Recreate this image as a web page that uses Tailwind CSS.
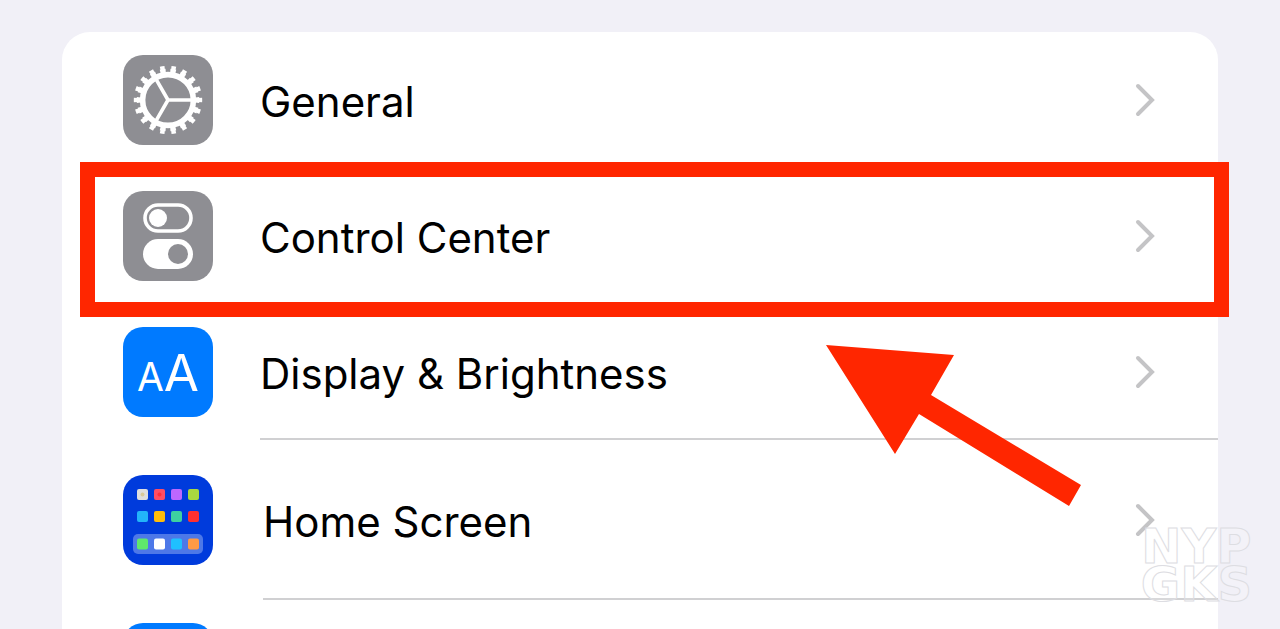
<!DOCTYPE html>
<html lang="en">
<head>
<meta charset="utf-8">
<meta name="viewport" content="width=device-width, initial-scale=1">
<title>Settings</title>
<script src="https://cdn.jsdelivr.net/npm/@tailwindcss/browser@4"></script>
</head>
<body class="relative h-screen overflow-hidden bg-[#f1f0f7] font-['Inter',sans-serif] text-[42px] leading-none text-black">
<main class="flex h-full flex-col pt-8 pr-[62px] pl-[62px]">
  <nav class="flex min-h-0 flex-1 flex-col rounded-t-[28px] bg-white">
    <a href="#general" class="flex h-[136px] shrink-0 items-center pl-[61px]">
      <svg class="size-[90px] shrink-0" viewBox="0 0 90 90" fill="none" stroke="#fff" aria-hidden="true">
        <rect width="90" height="90" rx="20" fill="#8e8e93" stroke="none"/>
        <g transform="translate(45 45)">
          <circle r="25.4" stroke-width="5.6"/>
          <circle r="29.3" stroke-width="4" pathLength="18" stroke-dasharray=".54 .46" stroke-dashoffset=".27"/>
          <circle r="32.2" stroke-width="4" pathLength="18" stroke-dasharray=".4 .6" stroke-dashoffset=".2"/>
          <path d="M0 0H24M0 0L-12 -20.8M0 0L-12 20.8" stroke-width="3.6"/>
        </g>
      </svg>
      <span class="ml-[47px] flex h-full flex-1 items-center justify-between pt-1 pr-[62px]">General
        <svg class="mb-1 h-9 w-6" viewBox="0 0 24 36" fill="none" stroke="#c4c4c6" stroke-width="4" stroke-linecap="round" aria-hidden="true"><path d="M6 4L20 18L6 32"/></svg>
      </span>
    </a>
    <a href="#control-center" class="relative flex h-[136px] shrink-0 items-center pl-[61px]">
      <svg class="size-[90px] shrink-0" viewBox="0 0 90 90" fill="none" aria-hidden="true">
        <rect width="90" height="90" rx="20" fill="#8e8e93"/>
        <rect x="22" y="14" width="46" height="26" rx="13" stroke="#fff" stroke-width="3.6"/>
        <circle cx="35" cy="27" r="9" fill="#fff"/>
        <rect x="20" y="48" width="50" height="30" rx="15" fill="#fff"/>
        <circle cx="55" cy="63" r="10" fill="#8e8e93"/>
      </svg>
      <span class="ml-[47px] flex h-full flex-1 items-center justify-between pt-1 pr-[62px]">Control Center
        <svg class="mb-1 h-9 w-6" viewBox="0 0 24 36" fill="none" stroke="#c4c4c6" stroke-width="4" stroke-linecap="round" aria-hidden="true"><path d="M6 4L20 18L6 32"/></svg>
      </span>
      <span class="absolute -top-[6px] -right-[11px] -bottom-[13px] left-[18px] border-[15px] border-[#ff2600]"></span>
    </a>
    <a href="#display" class="relative flex h-[136px] shrink-0 items-center pl-[61px]">
      <span class="flex size-[90px] shrink-0 items-baseline justify-center rounded-[20px] bg-[#007aff] pt-[21px] text-white" aria-hidden="true"><span class="text-[39px] leading-[50px]">A</span><span class="text-[51px] leading-[50px]">A</span></span>
      <span class="ml-[47px] flex h-full flex-1 items-center justify-between pt-1 pr-[62px]">Display &amp; Brightness
        <svg class="mb-1 h-9 w-6" viewBox="0 0 24 36" fill="none" stroke="#c4c4c6" stroke-width="4" stroke-linecap="round" aria-hidden="true"><path d="M6 4L20 18L6 32"/></svg>
      </span>
      <span class="absolute right-0 bottom-0 left-[198px] border-b-2 border-[#d0d0d2]"></span>
      <svg class="absolute top-[41px] right-[137px] z-10 h-[161px] w-[255px]" viewBox="0 0 255 161" aria-hidden="true"><path fill="#ff2600" d="M0 0L128 10L105 50L255 140L243 161L93 69L69 109Z"/></svg>
    </a>
    <a href="#home-screen" class="relative flex h-[160px] shrink-0 items-center pl-[61px]">
      <svg class="size-[90px] shrink-0" viewBox="0 0 90 90" aria-hidden="true">
        <rect width="90" height="90" rx="20" fill="#003bdc"/>
        <rect x="10" y="59" width="70" height="20" rx="5" fill="#4d78e8"/>
        <rect x="14" y="14" width="11" height="11" rx="2" fill="#dedede"/><circle cx="19.500" cy="19.500" r="2" fill="#d8c99a"/>
        <rect x="31" y="14" width="11" height="11" rx="2" fill="#ff4d63"/><circle cx="36.500" cy="19.500" r="2" fill="#ff2f3b"/>
        <rect x="48" y="14" width="11" height="11" rx="2" fill="#bd67ff"/>
        <rect x="65" y="14" width="11" height="11" rx="2" fill="#a9d840"/>
        <rect x="14" y="36" width="11" height="11" rx="2" fill="#22b4fa"/>
        <rect x="31" y="36" width="11" height="11" rx="2" fill="#ffbd0a"/>
        <rect x="48" y="36" width="11" height="11" rx="2" fill="#3ed1a0"/>
        <rect x="65" y="36" width="11" height="11" rx="2" fill="#ff3030"/>
        <rect x="14" y="63.500" width="11" height="11" rx="2" fill="#5fe86c"/>
        <rect x="31" y="63.500" width="11" height="11" rx="2" fill="#fff"/>
        <rect x="48" y="63.500" width="11" height="11" rx="2" fill="#1fc0ff"/>
        <rect x="65" y="63.500" width="11" height="11" rx="2" fill="#ff9a45"/>
      </svg>
      <span class="ml-[50px] flex h-full flex-1 items-center justify-between pt-1 pr-[62px]">Home Screen
        <svg class="mb-1 h-9 w-6" viewBox="0 0 24 36" fill="none" stroke="#c4c4c6" stroke-width="4" stroke-linecap="round" aria-hidden="true"><path d="M6 4L20 18L6 32"/></svg>
      </span>
      <span class="absolute right-0 bottom-0 left-[201px] border-b-2 border-[#d0d0d2]"></span>
    </a>
    <div class="flex min-h-0 flex-1 items-start overflow-hidden pt-[23px] pl-[61px]">
      <div class="size-[90px] shrink-0 rounded-[20px] bg-[#007aff]"></div>
    </div>
  </nav>
</main>
<p class="absolute right-7 bottom-[26px] flex flex-col items-center font-['DejaVu_Sans',sans-serif] text-[48px] leading-[38px] font-bold text-white/20 [-webkit-text-stroke:1px_#dddde2]"><span>NYP</span><span>GKS</span></p>
</body>
</html>
